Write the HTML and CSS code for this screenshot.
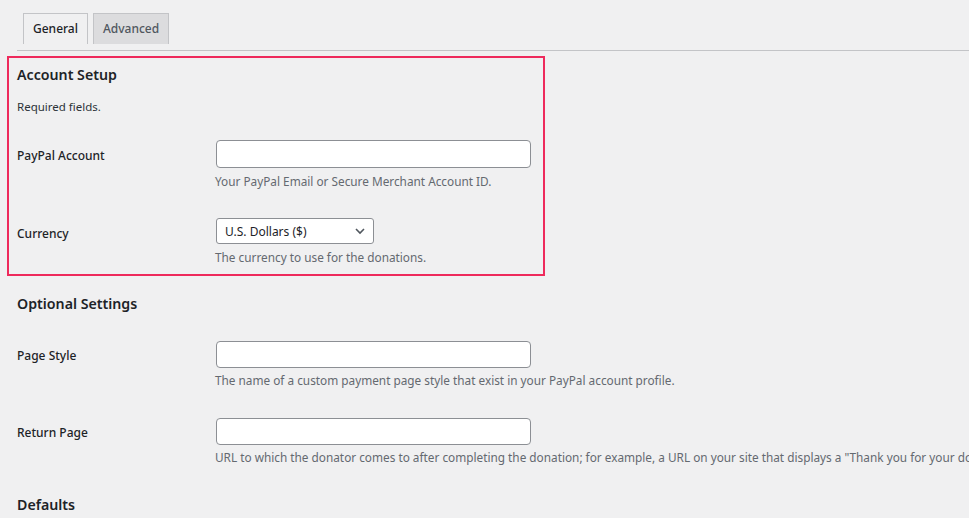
FILE: index.html
```html
<!DOCTYPE html>
<html lang="en">
<head>
<meta charset="utf-8">
<title>Settings</title>
<link rel="stylesheet" href="styles.css">
</head>
<body>
<div class="wrap">
  <nav class="tabs">
    <a class="tab active">General</a>
    <a class="tab">Advanced</a>
  </nav>

  <section class="box">
    <h2 class="heading">Account Setup</h2>
    <p class="note">Required fields.</p>
    <div class="rows first">
      <div class="row">
        <label class="label">PayPal Account</label>
        <div class="field">
          <input class="text" type="text">
          <p class="desc">Your PayPal Email or Secure Merchant Account ID.</p>
        </div>
      </div>
      <div class="row">
        <label class="label">Currency</label>
        <div class="field">
          <div class="select">
            <span>U.S. Dollars ($)</span>
            <svg class="chev" width="12" height="8" viewBox="0 0 12 8"><path d="M2 2l4 4 4-4" fill="none" stroke="#50575e" stroke-width="1.6"/></svg>
          </div>
          <p class="desc">The currency to use for the donations.</p>
        </div>
      </div>
    </div>
  </section>

  <section class="plain">
    <h2 class="heading">Optional Settings</h2>
    <div class="rows">
      <div class="row">
        <label class="label">Page Style</label>
        <div class="field">
          <input class="text" type="text">
          <p class="desc">The name of a custom payment page style that exist in your PayPal account profile.</p>
        </div>
      </div>
      <div class="row">
        <label class="label">Return Page</label>
        <div class="field">
          <input class="text" type="text">
          <p class="desc nowrap">URL to which the donator comes to after completing the donation; for example, a URL on your site that displays a "Thank you for your donation".</p>
        </div>
      </div>
    </div>
    <h2 class="heading defaults">Defaults</h2>
  </section>
</div>
</body>
</html>
```

FILE: styles.css
```css
html, body {
  margin: 0;
  padding: 0;
  background: #f0f0f1;
  overflow: hidden;
}
body {
  font-family: "Noto Sans", "Open Sans", sans-serif;
  font-size: 12px;
  color: #1d2327;
}
.wrap {
  padding-left: 17px;
}
.tabs {
  display: flex;
  gap: 5px;
  padding: 13px 0 6px 6px;
  border-bottom: 1px solid #c3c4c7;
}
.tab {
  display: block;
  height: 31px;
  line-height: 30px;
  padding: 0 9px;
  border: 1px solid #c3c4c7;
  border-bottom: none;
  background: #dcdcde;
  color: #50575e;
  font-size: 12px;
  font-weight: 500;
  box-sizing: border-box;
}
.tab.active {
  background: #f0f0f1;
  color: #1d2327;
}
.box {
  margin: 5px 0 0 -10px;
  width: 538px;
  box-sizing: border-box;
  border: 2px solid #ee2a5c;
  padding: 7px 0 8px 8px;
}
.heading {
  margin: 0;
  font-size: 14.2px;
  line-height: 20px;
  font-weight: 600;
}
.note {
  margin: 13px 0 0;
  line-height: 18px;
  font-size: 11.5px;
  color: #2c3338;
}
.rows {
  display: flex;
  flex-direction: column;
  gap: 28px;
  margin-top: 28px;
}
.rows.first {
  margin-top: 24px;
}
.row {
  display: grid;
  grid-template-columns: 199px 1fr;
}
.label {
  padding-top: 2px;
  line-height: 28px;
  font-weight: 500;
  font-size: 12px;
}
.field {
  min-width: 0;
}
.text {
  display: block;
  width: 315px;
  height: 28px;
  box-sizing: border-box;
  margin: 0;
  border: 1px solid #8c8f94;
  border-radius: 4px;
  background: #fff;
}
.select {
  display: flex;
  align-items: center;
  justify-content: space-between;
  width: 158px;
  height: 26px;
  box-sizing: border-box;
  padding: 0 7px 0 8px;
  border: 1px solid #8c8f94;
  border-radius: 3px;
  background: #fff;
  font-size: 12px;
}
.desc {
  margin: 4px 0 0 -1px;
  line-height: 18px;
  color: #646970;
  font-size: 11.8px;
}
.nowrap {
  white-space: nowrap;
}
.plain {
  padding-top: 18px;
}
.plain .rows {
  gap: 29px;
  margin-top: 27px;
}
.plain .text {
  height: 27px;
}
.plain .label {
  padding-top: 1px;
  line-height: 27px;
}
.plain .desc {
  margin-top: 3px;
}
.defaults {
  margin-top: 29px;
}
```
